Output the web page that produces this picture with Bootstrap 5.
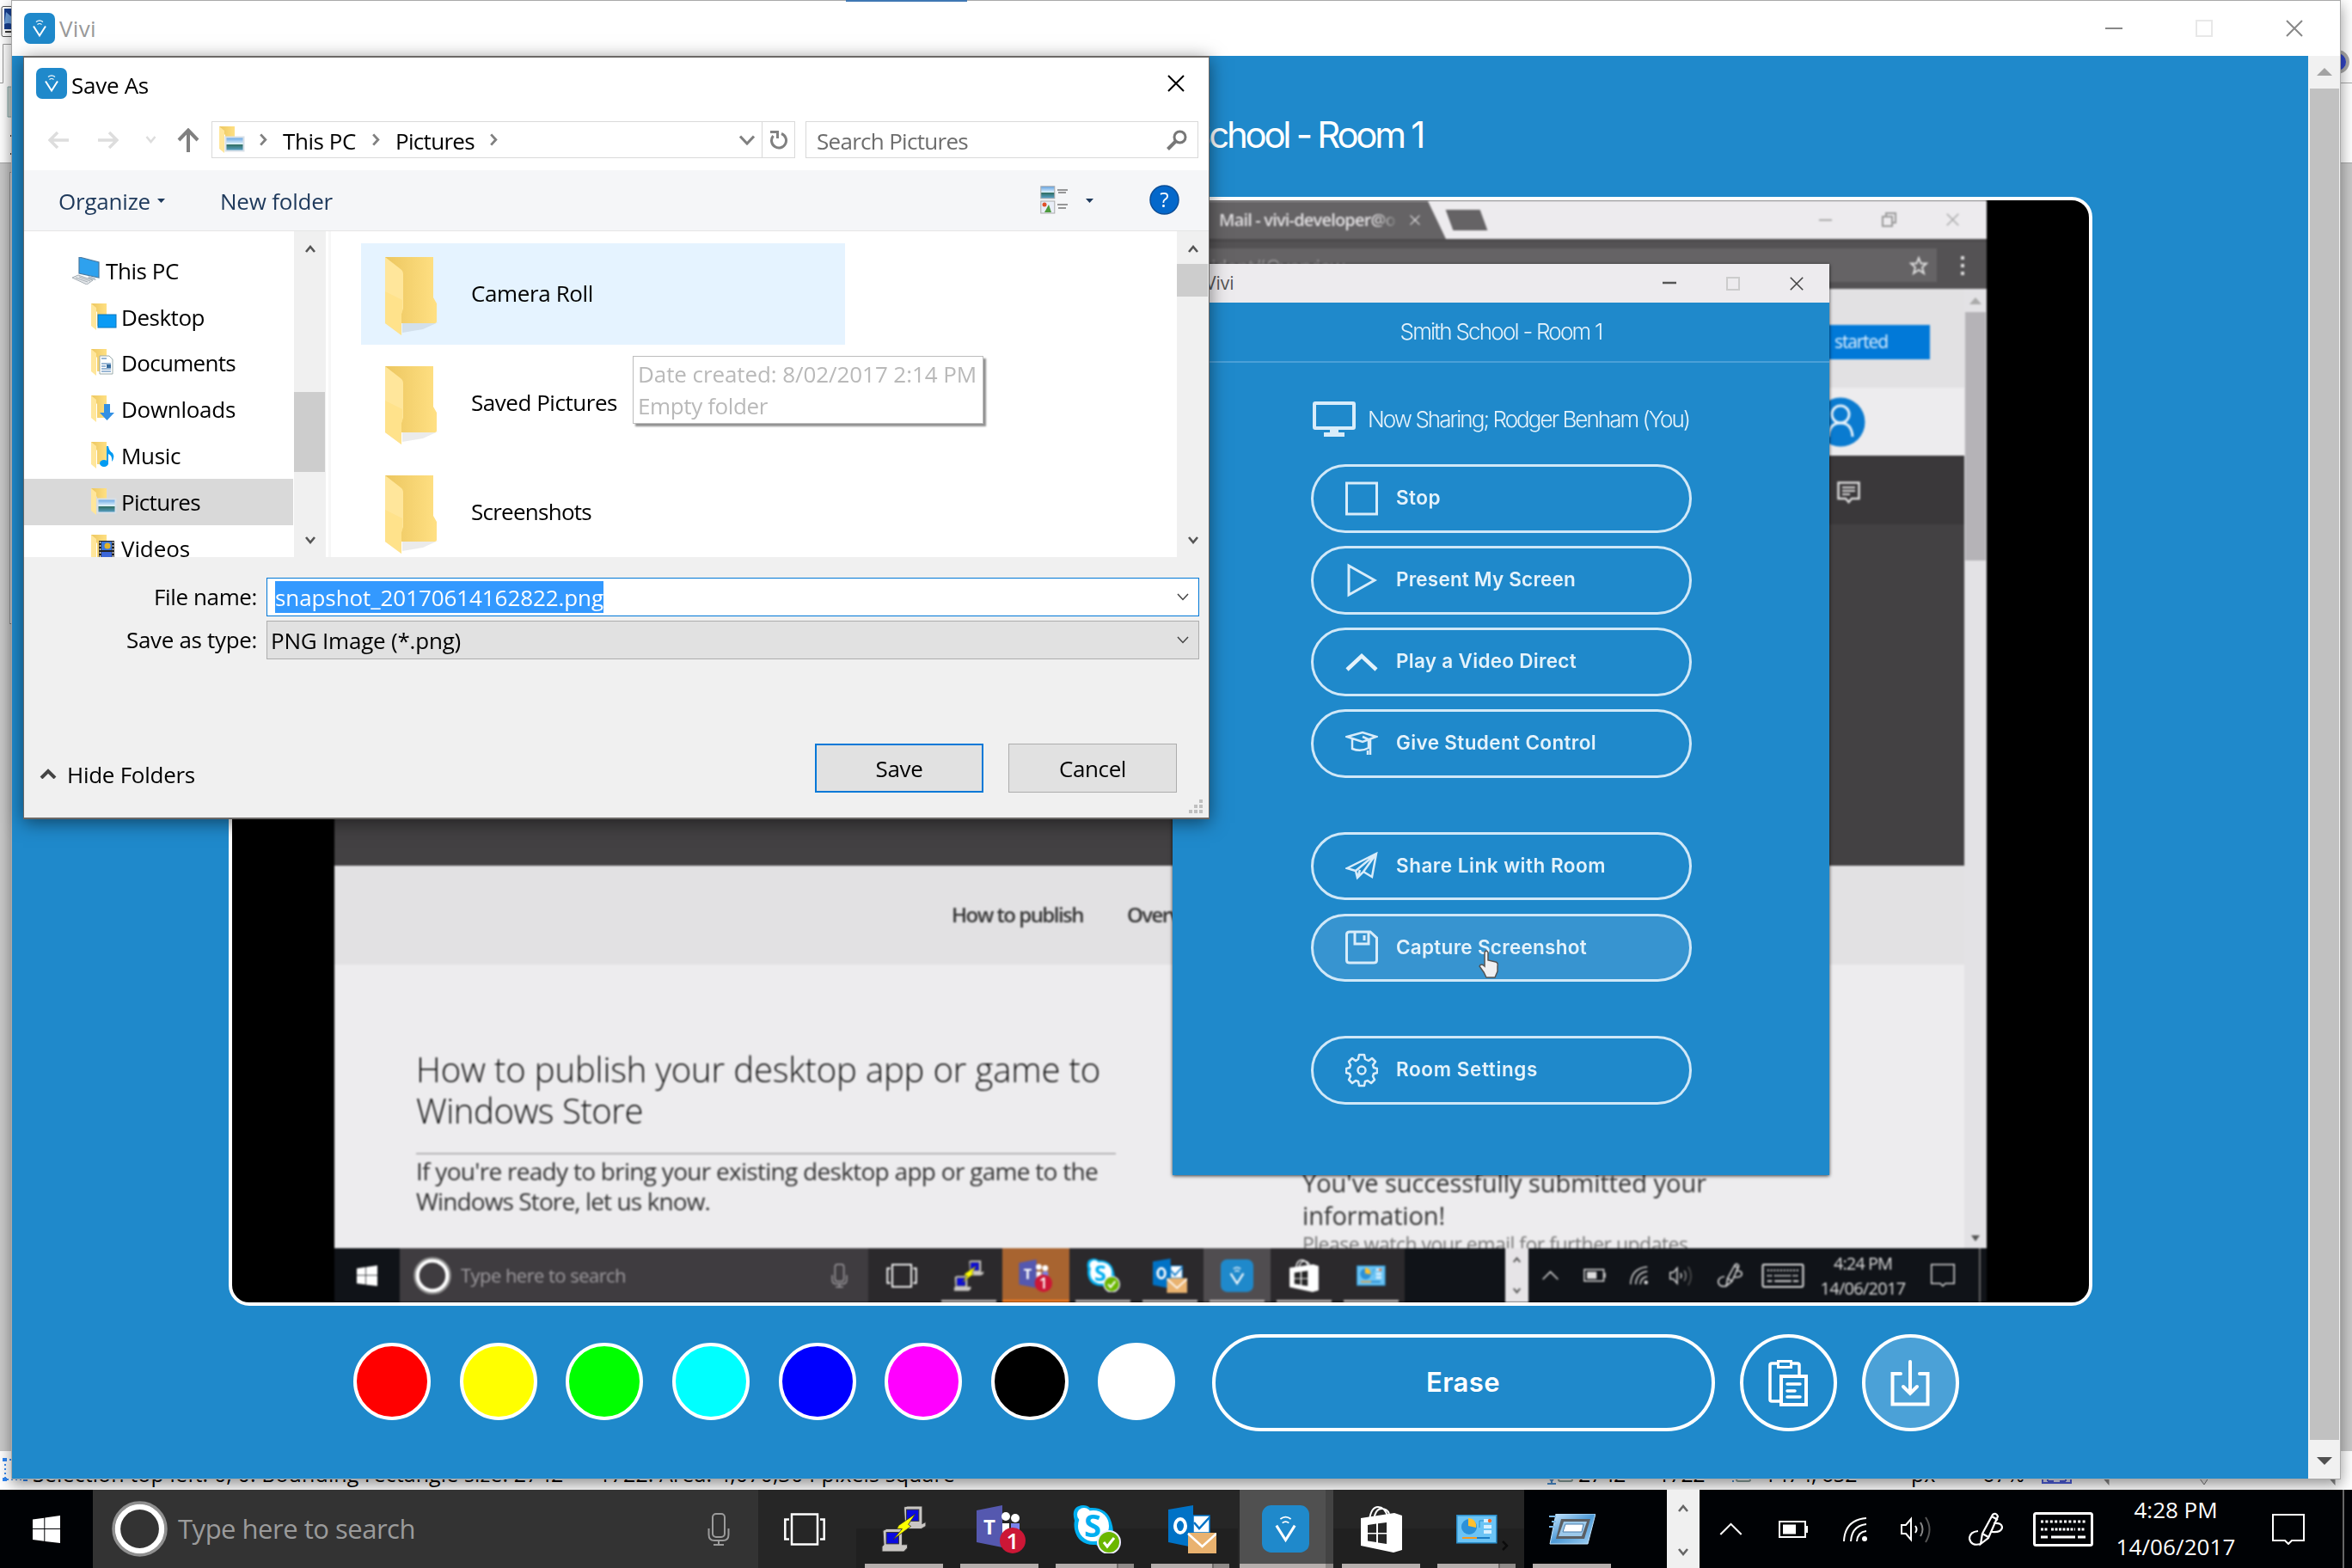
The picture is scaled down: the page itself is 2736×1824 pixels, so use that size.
<!DOCTYPE html>
<html lang="en">
<head>
<meta charset="utf-8">
<meta name="viewport" content="width=device-width, initial-scale=1">
<title>Vivi</title>
<link rel="stylesheet" href="https://cdn.jsdelivr.net/npm/bootstrap@5.3.0/dist/css/bootstrap.min.css">
<style>
:root{--vivi:#1f89cb;--ui:"Open Sans","Noto Sans",sans-serif;--brand:Inter,"Open Sans",sans-serif}
body{width:2736px;height:1824px;overflow:hidden;position:relative;background:#fff;font-family:var(--ui);font-size:26px;line-height:1.36;color:#000}
svg{display:block;flex:none}
span,h1,h2,p,button{white-space:nowrap}
.abs{position:absolute}
/* window behind */
.canvas-bg{top:189px;left:0;width:2736px;height:1499px;background:#c9c9c9;border-top:1px solid #aaa}
.canvas-doc{left:11px;top:200px;width:20px;height:526px;background:#dfe3ea;border:1px solid #999;border-bottom-color:#777}
.statusline{left:0;top:1688px;width:2736px;height:45px;background:#fff;overflow:hidden;font-size:25px;line-height:34px;padding-top:9px}
/* main window */
.win-main{left:13px;top:0;width:2710px;height:1721px;background:#fff;border:1px solid #a9a9a9;box-shadow:0 6px 16px rgba(0,0,0,.42)}
.win-title{height:64px;padding-left:14px}
.win-title span{color:#999;margin-left:5px;padding-top:2px}
.win-ctl{padding-right:43px;color:#888}
.app{height:1655px}
.app-pane{width:2671px;background:var(--vivi)}
.app-head{height:164px;padding-right:1030px;padding-top:63px;font-family:var(--brand);font-size:42px;font-weight:400;color:#fff;line-height:58px;margin:0}
.stage{width:2168px;height:1290px;margin-left:252px;border:4px solid #fff;border-radius:24px;background:#000;overflow:hidden}
.tools{padding-top:33px;padding-left:397px}
.dot{width:90px;height:90px;border-radius:50%;border:4px solid #fff;margin-right:33.700px;margin-bottom:4px;flex:none;padding:0}
.erase{width:585px;height:113px;border:4px solid #fff;border-radius:57px;color:#fff;font-family:var(--brand);font-weight:600;font-size:31px;margin-left:9px;background:none}
.round{width:113px;height:113px;border:4px solid #fff;border-radius:50%;margin-left:29px;background:none;padding:0}
.round.lit{background:#4ba1d7}
.vbar{width:37px;background:#f1f1f1;padding:0 1px 0 2px}
.vbar .btn-cell{height:38px}
.vbar .thumb{background:#c1c1c1;height:1572px}
/* shared screen */
.feed{width:1922px;height:1282px;margin-left:119px;filter:blur(.8px);background:#edebee}
.tabs{height:45px;background:#edebee}
.tab-on{width:1293px;background:#656365;clip-path:polygon(0 2%,1272px 2%,100% 100%,0 100%);color:#e6e4e6;font-size:20px;font-weight:600;padding-right:30px}
.tab-on .fade-txt{background:linear-gradient(90deg,#e6e4e6 88%,#777 100%);-webkit-background-clip:text;color:transparent}
.newtab{width:40px;height:24px;background:#656365;transform:skewX(20deg);margin-left:4px}
.urlbar{height:58px;background:#545254;border-top:3px solid #4b494b}
.urlbar .field{width:1864px;height:39px;background:#656365;color:#989698;font-size:22px;padding-left:1020px;line-height:34px}
.page{width:1896px}
.pg-a{height:115px;background:#e2e1e3;padding-right:40px;padding-top:8px}
.pg-b{height:79px;background:#edecee;padding-right:115px}
.pg-c{height:80px;background:#3a383a;padding-right:121px;padding-top:6px}
.pg-d{height:397px;background:#434143}
.pg-e{height:115px;background:#e2e1e3;padding-left:718px;font-size:24px;font-weight:600;color:#333;gap:51px}
.pg-f{height:330px;background:#edecee;color:#333;overflow:hidden}
.started{width:200px;height:40px;background:#0179d8;color:#dff0ff;font-size:21px;padding-right:49px}
.art{width:814px;margin-left:95px;padding-top:98px;flex:none}
.art h2{font-size:40px;line-height:48px;font-weight:300;margin:0;color:#111}
.art hr{margin:25px 0 2px;border-top:2px solid #b5b4b6;opacity:1}
.art p{font-size:28px;line-height:34.5px;margin:0;font-weight:400}
.art2{margin-left:217px;padding-top:235px}
.art2 p{font-size:29px;line-height:38px;margin:0}
.art2 p.sub{font-size:23px;line-height:28px;color:#777}
.fbar{width:26px;background:#e3e2e5;padding-top:9px;padding-bottom:6px}
.fbar .thumb{width:24px;height:289px;background:#b5b3b7;margin-top:8px}
/* taskbars */
.tb{background:#000205;color:#fff}
.tb-in{height:63px;background:#101318}
.tb-in .cell{width:78px;background:#2b292c;position:relative}
.tb-in .cell.mark-on::after{content:"";position:absolute;left:7px;right:7px;bottom:0;height:3px;background:#b5aeac}
.tb-in .teams{background:#a86430}.tb-in .teams.mark-on::after{left:0;right:0;background:#f47b20}
.tb-in .lit{background:#504d50}
.tb-in .tray{grid-template-columns:50px 54px 48px 50px 64px 60px 126px 60px;font-size:20px;line-height:29px;color:#ddd}
.tb-in .srch{width:545px;background:#3f3c40;color:#9d9a9e;font-size:22px;padding-left:16px;padding-right:24px}
.tb-in .srch span{margin-left:11px}
.tb-in .strip{width:27px;background:#e6e4e7;margin-left:117px;padding:10px 0;color:#555}
.tb-out{left:0;top:1733px;width:2736px;height:91px}
.tb-out .startcell{width:108px}
.tb-out .srch{width:774px;background:#333;color:#9b9b9b;font-size:31px;padding-left:22px;padding-right:33px}
.tb-out .srch span{margin-left:12px}
.tb-out .tview{width:114px;background:#262626;padding-right:6px}
.tb-out .cell{width:111px;background:linear-gradient(#262626 0 50%,#202020 50%);position:relative}
.tb-out .cell::after{content:"";position:absolute;left:10px;width:91px;bottom:0;height:5px;background:#b5aeac}
.tb-out .cell.split::after{background:linear-gradient(90deg,#b5aeac 71px,#6d6866 71px 73px,#8f8a88 73px)}
.tb-out .cell.lit{background:linear-gradient(90deg,#262626 2px,#505050 2px 102px,#434343 102px)}
.tb-out .cell.lit::after{left:2px;width:109px;background:linear-gradient(90deg,#b5aeac 100px,#8f8a88 100px)}
.tb-out .cell.plain{background:none}
.tb-out .strip{width:38px;background:#f0f0f0;margin-left:55px;padding:17px 0 14px;color:#666}
.tb-out .tray{grid-template-columns:72px 74px 70px 72px 90px 90px 172px 90px;font-size:26px;line-height:42.500px}
.tb-out .tray>div{margin-top:-2px}
.tray{display:grid;place-items:center;text-align:center}
.peek{width:2px;background:#666}
/* sharing window */
.win-share{left:1364px;top:307px;width:764px;height:1060px;background:var(--vivi);box-shadow:0 1px 4px rgba(0,0,0,.75);filter:blur(.7px);color:#e4f2fb;font-family:var(--brand)}
.ws-title{height:45px;background:#edebee;color:#555;font-family:var(--ui);font-size:21px;padding-left:38px;padding-right:30px}
.ws-title .ctl{gap:58px;color:#444}
.ws-head{height:70px;border-bottom:2px solid #4aa0d8;font-weight:300;font-size:26px;padding-bottom:1px}
.ws-now{height:118px;padding-left:163px;padding-top:13px;font-weight:300;font-size:26px;gap:14px}
.ws-btn{width:443px;height:79.500px;border:3px solid #d0e8f8;border-radius:40px;color:#e4f2fb;font-weight:600;font-size:22.500px;margin:0 0 15.500px 161px;padding:0 0 0 37px;background:none}
.ws-btn svg{margin-right:21px}
.ws-btn.hot{background:#3794d0}
.ws-btn.gap-after{margin-bottom:63px}
/* save dialog */
.dlg{left:27px;top:65px;width:1380px;height:888px;background:#fff;border:1px solid #6b6866;border-top-width:2px;border-bottom-width:2px;box-shadow:0 4px 20px rgba(0,0,0,.5)}
.dlg-title{height:60px;padding:0 28px 0 14px}
.dlg-title span{margin-left:5px;padding-top:5px}
.dlg-nav{height:71px;padding-left:28px}
.dlg-nav span{padding-top:4px}
.addr{width:679px;height:43px;border:1px solid #d9d9d9;margin-left:14px;padding-left:8px}
.addr .rf{width:38px;border-left:1px solid #d9d9d9}
.findbox{width:457px;height:43px;border:1px solid #d9d9d9;margin-left:12px;padding:0 12px 0 12px;color:#6d6d6d}
.dlg-tools{height:71px;background:#f5f6f8;border-bottom:1px solid #e5e5e5;color:#1e395b;padding-left:40px;padding-right:34px}
.dlg-tools span{padding-top:3px}
.dlg-body{height:379px}
.tree{width:314px;padding-top:19px;overflow:hidden}
.tree>div{height:53.800px;padding-left:78px;gap:5px;flex:none}
.tree>div.top{padding-left:56px;gap:7px}
.tree span{padding-top:1px}
.tree .on{background:#d9d9d9;margin-right:1px}
.sb{width:37px;background:#f0f0f0;padding:16px 0 15px;color:#555}
.sb svg{margin:0 auto}
.sb .thumb{background:#cdcdcd;width:36px}
.vline{width:3px;background:#f7f7f7;margin-left:3px}
.files{padding:14px 0 0 35px;overflow:hidden}
.tile{width:563px;height:118px;margin-bottom:9px;padding-left:28px;gap:38px;flex:none}
.tile svg{margin-top:6px}
.tile.hover{background:#e5f3ff}
.dlg-foot{height:303px;background:#f0f0f0;padding-top:24px}
.lab{width:271px;text-align:right;margin-right:11px}
.combo{width:1085px;height:45px;border:1px solid #adadad;background:#e1e1e1;padding:0 11px 0 4px}
.combo.act{border-color:#0078d7;background:#fff;padding-left:9px}
.combo.act span{background:#3399ff;color:#fff;height:37px;line-height:38px}
.second{margin-top:5px}
.second span{padding-top:2px}
.acts{margin-top:98px;padding-left:18px}
.hidef{padding-top:19px;gap:12px}
.wbtn{width:196px;height:57px;border:1px solid #adadad;background:#e1e1e1;padding:3px 0 0}
.wbtn.def{border:2px solid #0078d7}
.wbtn.last{margin:0 37px 0 29px}
.grip{margin-top:8px;margin-right:7px}
.tip{left:736px;top:414px;width:408px;height:79px;background:#fff;border:1px solid #bdbdbd;box-shadow:3px 3px 2px #909090;color:#b9b9b9;line-height:36.500px;padding:2px 5px}
</style>
</head>
<body>
<svg width="0" height="0" class="abs" aria-hidden="true">
<defs>
<linearGradient id="gf" x1="0" x2="1"><stop offset="0" stop-color="#ecc65f"/><stop offset="1" stop-color="#ffe083"/></linearGradient>
<linearGradient id="gs" x1="0" y1="0" x2="0" y2="1"><stop offset="0" stop-color="#5d9fe2"/><stop offset=".5" stop-color="#e2f3fb"/><stop offset=".52" stop-color="#2d6b5c"/><stop offset="1" stop-color="#5ba4d0"/></linearGradient>
<linearGradient id="gr" x1="0" x2="1" y2="1"><stop offset="0" stop-color="#cfeaff"/><stop offset=".5" stop-color="#4e9ad6"/><stop offset="1" stop-color="#a6d3f5"/></linearGradient>
</defs>
<symbol id="vivi" viewBox="0 0 36 36"><rect width="36" height="36" rx="7" fill="#1f89cb"/><path d="M11 15.500 18 26.500 25 15.500" fill="none" stroke="#fff" stroke-width="2"/><path d="M14 10.500q4-3.200 8 0M15.500 13.500q2.500-2 5 0" fill="none" stroke="#fff" stroke-width="1.200"/></symbol>
<symbol id="close" viewBox="0 0 20 20"><path d="M1 1 19 19M19 1 1 19" fill="none" stroke="currentColor" stroke-width="2"/></symbol>
<symbol id="up" viewBox="0 0 12 9"><path d="M1 8 6 2 11 8" fill="none" stroke="currentColor" stroke-width="2.600"/></symbol>
<symbol id="dn" viewBox="0 0 12 9"><path d="M1 1 6 7 11 1" fill="none" stroke="currentColor" stroke-width="2.600"/></symbol>
<symbol id="thin" viewBox="0 0 14 9"><path d="M1 1 7 7.500 13 1" fill="none" stroke="#444" stroke-width="1.500"/></symbol>
<symbol id="rt" viewBox="0 0 10 16"><path d="M2 1.500 8 8 2 14.500" fill="none" stroke="#808080" stroke-width="3"/></symbol>
<symbol id="fold" viewBox="0 0 62 92"><path d="M44 84 66 74 60 77H20V88Z" fill="#000" opacity=".08"/><path d="M0 0H56V47L60 54V75Q60 77 58 77H18V40L0 4Z" fill="url(#gf)"/><path d="M0 0 18 14Q21 16 21 20V60L19 66V91L0 77Z" fill="#ffe69b"/><path d="M0 40 20 50V64L19 66V91L0 77Z" fill="#ffdf85" opacity=".7"/></symbol>
<symbol id="mf" viewBox="0 0 30 32"><path d="M0 0H18V26H7V10L0 3Z" fill="url(#gf)"/><path d="M0 0 6 5V31L0 26Z" fill="#ffe69b"/></symbol>
<symbol id="i-desk" viewBox="0 0 30 32"><use href="#mf"/><rect x="8" y="13" width="21" height="15" fill="#0a9bf5" stroke="#0b76be"/></symbol>
<symbol id="i-doc" viewBox="0 0 30 32"><use href="#mf"/><path d="M10 8H21L25 12V29H10Z" fill="#fff" stroke="#9aa"/><path d="M12 11H18M12 17H23M12 20H17M12 23H23M12 26H23" stroke="#7aa0c8" stroke-width="1.500"/><rect x="18" y="18" width="5" height="4" fill="#356a9c"/></symbol>
<symbol id="i-down" viewBox="0 0 30 32"><use href="#mf"/><path d="M15 10H22V20H27L18.500 29 10 20H15Z" fill="#3390e4"/></symbol>
<symbol id="i-mus" viewBox="0 0 30 32"><use href="#mf"/><ellipse cx="15" cy="25" rx="5" ry="4" fill="#009bf2"/><path d="M18 5H20Q21 11 25 13 28 18 24 23 25 16 20 14V26H18Z" fill="#009bf2"/></symbol>
<symbol id="i-pic" viewBox="0 0 30 32"><use href="#mf"/><rect x="7.500" y="12.500" width="21" height="16" fill="url(#gs)" stroke="#d8e0e8" stroke-width="2"/></symbol>
<symbol id="i-vid" viewBox="0 0 30 32"><use href="#mf"/><rect x="9" y="7" width="18" height="25" fill="#222"/><rect x="12" y="8" width="12" height="10" fill="#3b78dc"/><circle cx="19" cy="13" r="3.500" fill="#e4b429"/><rect x="12" y="20" width="12" height="12" fill="#3b66d8"/><path d="M10.500 8V32M25.500 8V32" stroke="#ddd" stroke-dasharray="2 2" stroke-width="1.500"/></symbol>
<symbol id="i-pc" viewBox="0 0 32 32"><path d="M8 0 31 6V24L8 19Z" fill="#2ea1ee" stroke="#4b7aa0" stroke-width="1.200"/><path d="M19 22 26 24 28 27 18 26Z" fill="#b9c3cc"/><path d="M0 24 7 21 24 27 17 32Z" fill="#e4e7ea" stroke="#a5adb4"/><path d="M4 24 18 29M8 23 21 28" stroke="#a5adb4"/></symbol>
<symbol id="win" viewBox="0 0 32 32"><path d="M0 4.600 13.300 2.700V15H0ZM14.300 2.500 32 0V15H14.300ZM0 16H13.300V29.800L0 28ZM14.300 16H32V32L14.300 30Z" fill="currentColor"/></symbol>
<symbol id="ring" viewBox="0 0 66 66"><circle cx="33" cy="33" r="31" fill="none" stroke="#8f8f8f" stroke-width="3.500"/><circle cx="33" cy="33" r="26" fill="none" stroke="#fff" stroke-width="6.500"/></symbol>
<symbol id="mic" viewBox="0 0 26 38"><rect x="6" y="1" width="14" height="27" rx="4" fill="none" stroke="currentColor" stroke-width="2"/><path d="M1.500 18V25Q1.500 32 8 32H18Q24.500 32 24.500 25V18M13 32V37M7 37H19" fill="none" stroke="currentColor" stroke-width="2"/></symbol>
<symbol id="tv" viewBox="0 0 48 38"><rect x="9" y="1.500" width="30" height="35" fill="none" stroke="currentColor" stroke-width="2.500"/><path d="M6 7.500H1.300V30.500H6M42 7.500H46.700V30.500H42" fill="none" stroke="currentColor" stroke-width="2.500"/></symbol>
<symbol id="putty" viewBox="0 0 52 52"><g stroke="#333" stroke-width="1"><path d="M26 1 30 0H47V20L51 18V23L46 26H25V22L27 19Z" fill="#c9c6c3"/><rect x="29" y="4" width="14" height="13" fill="#0a0ae0"/><path d="M2 28 6 26H24V44L30 44V48L26 52H1V46L3 44Z" fill="#c9c6c3"/><rect x="6" y="30" width="14" height="13" fill="#0a0ae0"/></g><path d="M39 9 20 22 18 26H24L14 38 34 23 31 21Z" fill="#ff0" stroke="#332" stroke-width=".8"/></symbol>
<symbol id="teams" viewBox="0 0 58 56"><path d="M0 6 30 0V49L0 43Z" fill="#5558af"/><text x="8" y="34" font-family="Open Sans" font-weight="700" font-size="24" fill="#fff">T</text><circle cx="34" cy="13" r="5" fill="#fff"/><circle cx="45" cy="15" r="5" fill="#fff"/><path d="M30 21H38V32H30Z" fill="#fff"/><path d="M40 21H50V30H40Z" fill="#7b83eb"/><circle cx="42" cy="41" r="15" fill="#cc1736"/><text x="34.500" y="50.500" font-family="Open Sans" font-size="26" font-weight="600" fill="#fff">1</text></symbol>
<symbol id="skype" viewBox="0 0 56 56"><path d="M12 0Q17 0 20 3 40 2 45 20 48 30 46 33 48 47 35 48 29 48 27 46 6 47 2 28 1 22 2 18-3 1 12 0Z" fill="#00aff0"/><circle cx="24" cy="24" r="18" fill="#fff"/><circle cx="13" cy="11" r="8" fill="#fff"/><circle cx="35" cy="36" r="8" fill="#fff"/><text x="13" y="37" font-family="Open Sans" font-size="36" font-weight="700" fill="#00aff0">S</text><circle cx="42" cy="43" r="13" fill="#6bb700" stroke="#eef" stroke-width="2"/><path d="M36 43 40 48 48 38" fill="none" stroke="#fff" stroke-width="3"/></symbol>
<symbol id="outlook" viewBox="0 0 56 56"><path d="M0 5 29 0V49L0 43Z" fill="#0072c6"/><ellipse cx="14" cy="24" rx="6" ry="8" fill="none" stroke="#fff" stroke-width="4"/><path d="M29 12H48V32H29Z" fill="#fff" stroke="#0072c6" stroke-width="1.500"/><path d="M30 20 36 27 48 14" fill="none" stroke="#0072c6" stroke-width="2.500"/><rect x="23" y="32" width="33" height="24" fill="#e9b26f"/><path d="M23 33 39.500 48 56 33" fill="none" stroke="#fff" stroke-width="2.500"/></symbol>
<symbol id="store" viewBox="0 0 48 54"><path d="M10 16Q12 1 20 1T31 12M15 16Q17 3 24 3T33 9" fill="none" stroke="#fff" stroke-width="2"/><path d="M0 14 39 8 48 11V51L38 54 0 46Z" fill="#fff"/><path d="M8 22 18 20.500V31H8ZM20 20.200 30 19V31H20ZM8 32.500H18V42L8 40.500ZM20 32.500H30V44L20 42.500Z" fill="#262626"/></symbol>
<symbol id="cpl" viewBox="0 0 48 34"><rect x=".8" y=".8" width="46" height="32" fill="#6cc4f5" stroke="#2b8fcb" stroke-width="1.500"/><circle cx="15" cy="14" r="9" fill="#2c91d8"/><path d="M14 13V4A9 9 0 0 1 23 15Z" fill="#ffc02e"/><path d="M27 15V7H33" fill="none" stroke="#2b8fcb"/><rect x="32" y="5" width="9" height="4" fill="#d8f0ff"/><circle cx="39" cy="7" r="2.200" fill="#f06a2a"/><rect x="32" y="12" width="9" height="4" fill="#d8f0ff"/><rect x="32" y="18" width="9" height="4" fill="#d8f0ff"/><path d="M7 27H24" stroke="#f49a22" stroke-width="2"/><path d="M24 27H39" stroke="#1b7dc4" stroke-width="2"/></symbol>
<symbol id="runi" viewBox="0 0 54 36"><path d="M8 0H54L45 35H1Z" fill="url(#gr)" stroke="#bfe2fb"/><path d="M14 6H48L41 29H8Z" fill="#5b5f63"/><path d="M17 9H44L38 26H11Z" fill="#9cc9ea"/><path d="M19 12H40L38 21H16Z" fill="#fff" stroke="#4b7dab"/><path d="M0 3H8M3 9H8M0 15H6" stroke="#7ab8e8" stroke-width="2"/></symbol>
<symbol id="bat" viewBox="0 0 34 20"><rect x="1" y="1" width="30" height="18" fill="none" stroke="currentColor" stroke-width="2"/><rect x="32" y="6" width="2" height="8" fill="currentColor"/><rect x="5" y="4.500" width="15" height="11" fill="currentColor"/></symbol>
<symbol id="wifi" viewBox="0 0 28 28"><path d="M1 28Q2 3 27 1M9 28Q10 10 27 8M16 28Q17 17 27 16" fill="none" stroke="currentColor" stroke-width="2"/><circle cx="25" cy="25" r="3" fill="currentColor"/></symbol>
<symbol id="vol" viewBox="0 0 36 32"><path d="M1 11H6L12 4V28L6 21H1Z" fill="none" stroke="currentColor" stroke-width="2"/><path d="M17 12Q20 16 17 20" fill="none" stroke="currentColor" stroke-width="2"/><path d="M23 8Q28 16 23 24" fill="none" stroke="#888" stroke-width="2"/><path d="M29 2Q38 16 29 31" fill="none" stroke="#555" stroke-width="2"/></symbol>
<symbol id="pen" viewBox="0 0 40 40"><path d="M14 37 16 25 28 3Q32 0 34 5L23 30ZM27 5 34 9M16 25 23 29" fill="none" stroke="currentColor" stroke-width="2.200"/><path d="M11 22Q1 23 1 31 3 40 14 37M29 13Q39 12 39 18 38 24 27 23" fill="none" stroke="currentColor" stroke-width="2.200"/></symbol>
<symbol id="kb" viewBox="0 0 70 40"><rect x="1.500" y="1.500" width="67" height="37" rx="2" fill="none" stroke="currentColor" stroke-width="3"/><path d="M9 11H61" stroke="currentColor" stroke-width="3" stroke-dasharray="3 2.400"/><path d="M9 20H18M21 20H49M52 20H61" stroke="currentColor" stroke-width="3" stroke-dasharray="3 1.500"/><path d="M9 29H17M21 29H49M52 29H61" stroke="currentColor" stroke-width="3"/></symbol>
<symbol id="note" viewBox="0 0 38 36"><path d="M1 1H37V31H23L19 35 15 31H1Z" fill="none" stroke="currentColor" stroke-width="2"/></symbol>
<symbol id="caret" viewBox="0 0 28 16"><path d="M1 15 14 2 27 15" fill="none" stroke="currentColor" stroke-width="2.200"/></symbol>
</svg>

<!-- editor window behind everything -->
<div class="abs canvas-bg"></div>
<div class="abs canvas-doc"></div>
<svg class="abs" width="14" height="188" viewBox="0 0 14 188"><rect x="2" y="7.500" width="30" height="35" rx="2" fill="#fff" stroke="#555"/><path d="M5 10H14V34H5Z" fill="#173f8f"/><path d="M7 14 14 20V28Q9 26 5 28Z" fill="#6fa3e0"/><path d="M6 37H14" stroke="#333" stroke-width="2"/><path d="M14 51.500H3.500V96.500H0" fill="none" stroke="#999"/><path d="M14 101H9V136H14" fill="#c9d6d3" stroke="#8aa"/><path d="M12 158H14M12 179H14" stroke="#333" stroke-width="2"/></svg>
<svg class="abs end-0" width="14" height="188" viewBox="0 0 14 188"><circle cx="-3" cy="72" r="12" fill="#3145c8" stroke="#aaa" stroke-width="4"/><path d="M0 96.500H14" stroke="#aaa"/></svg>
<div class="abs statusline">
  <svg class="abs" style="left:2px;top:7px" width="32" height="40" viewBox="0 0 32 40"><path d="M4 3V26H30M4 3H14" fill="none" stroke="#3a8cf0" stroke-width="2" stroke-dasharray="2 3"/><path d="M1 1H6V5H1ZM1 24H6V28H1ZM25 24H30V28H25Z" fill="#2f86f3"/></svg>
  <span class="abs" style="left:38px" data-w="1073">Selection top left: 0, 0. Bounding rectangle size: 2742 &nbsp;× &nbsp;1722. Area: 4,070,304 pixels square</span>
  <svg class="abs" style="left:1799px;top:26px" width="34" height="15" viewBox="0 0 34 15"><path d="M6 0V12M1 12H11M3 5 6 9 9 5" stroke="#4b8fd0" stroke-width="2" fill="none"/><rect x="14" y="-7" width="16" height="16" rx="2" fill="none" stroke="#8aa09c" stroke-width="2"/></svg>
  <span class="abs" style="left:1836px" data-w="147">2742 &nbsp; × 1722</span>
  <svg class="abs" style="left:2014px;top:26px" width="24" height="14" viewBox="0 0 24 14"><path d="M2 0V12" stroke="#4b8fd0" stroke-dasharray="2 2" stroke-width="2"/><rect x="6" y="-7" width="16" height="16" rx="2" fill="none" stroke="#8aa09c" stroke-width="2"/></svg>
  <span class="abs" style="left:2052px" data-w="108">1474, 652</span>
  <span class="abs" style="left:2223px">px</span>
  <span class="abs" style="left:2306px" data-w="49">67%</span>
  <svg class="abs" style="left:2375px;top:14px" width="36" height="24" viewBox="0 0 36 24"><rect x="1" y="-3" width="33" height="26" fill="#dfe4ff" stroke="#4e5fe0" stroke-width="2"/><path d="M7 15V21M7 21H14M28 15V21M28 21H21" stroke="#4e5fe0" stroke-width="2" fill="none"/></svg>
  <svg class="abs" style="left:2442px;top:28px" width="276" height="14" viewBox="0 0 276 14"><path d="M3 0 10 8V2M266 0 273 8V2" fill="none" stroke="#888" stroke-width="3"/><path d="M114 0 122 11 129 0" fill="#eee" stroke="#777"/></svg>
</div>

<!-- Vivi main window -->
<div class="abs win-main">
  <div class="win-title d-flex align-items-center">
    <svg width="36" height="36"><use href="#vivi"/></svg>
    <span data-w="43">Vivi</span>
    <div class="win-ctl ms-auto d-flex align-items-center">
      <svg width="20" height="20" viewBox="0 0 20 20"><path d="M0 10H20" stroke="#888" stroke-width="2"/></svg>
      <svg style="margin:0 85px" width="20" height="20" viewBox="0 0 20 20"><rect x="1" y="1" width="18" height="18" fill="none" stroke="#e8e8e8" stroke-width="2"/></svg>
      <svg width="20" height="20"><use href="#close"/></svg>
    </div>
  </div>
  <div class="app d-flex">
    <div class="app-pane">
      <h1 class="app-head text-end"><span data-w="377">Smith School - Room 1</span></h1>
      <div class="stage">
        <div class="feed d-flex flex-column">
          <div class="tabs d-flex align-items-center">
            <div class="tab-on h-100 d-flex align-items-center justify-content-end">
              <span class="fade-txt" data-w="205">Mail - vivi-developer@o</span>
              <svg style="margin-left:17px" width="12" height="12"><use href="#close"/></svg>
            </div>
            <div class="newtab"></div>
            <div class="ms-auto d-flex align-items-center" style="padding-right:32px;gap:58px;color:#aaa">
              <svg width="15" height="14" viewBox="0 0 15 14"><path d="M0 7H15" stroke="#aaa" stroke-width="2"/></svg>
              <svg width="17" height="17" viewBox="0 0 17 17"><path d="M1 5H12V16H1ZM5 5V1H16V12H12" fill="none" stroke="#999" stroke-width="2"/></svg>
              <svg width="15" height="15"><use href="#close"/></svg>
            </div>
          </div>
          <div class="urlbar d-flex align-items-center">
            <div class="field d-flex align-items-center justify-content-between">
              <span data-w="155">ident#Overview</span>
              <svg style="margin-right:10px" width="22" height="22" viewBox="0 0 22 22"><path d="M11 2 13.500 8.500H20L15 13 17 20 11 16 5 20 7 13 2 8.500H8.500Z" fill="none" stroke="#ddd" stroke-width="2"/></svg>
            </div>
            <svg style="margin-left:28px" width="5" height="24" viewBox="0 0 5 24"><path d="M0 1H4V5H0ZM0 10H4V14H0ZM0 19H4V23H0Z" fill="#ddd"/></svg>
          </div>
          <div class="d-flex" style="height:1116px">
            <div class="page">
              <div class="pg-a d-flex align-items-center justify-content-end"><div class="started d-flex align-items-center justify-content-end"><span data-w="62">started</span></div></div>
              <div class="pg-b d-flex align-items-center justify-content-end">
                <svg width="58" height="58" viewBox="0 0 58 58"><circle cx="29" cy="29" r="28.500" fill="#0a7bd0"/><circle cx="29" cy="20" r="10" fill="none" stroke="#e6f2fb" stroke-width="3"/><path d="M15 46Q16 30 29 30T43 46" fill="none" stroke="#e6f2fb" stroke-width="3"/></svg>
              </div>
              <div class="pg-c d-flex align-items-center justify-content-end">
                <svg width="27" height="26" viewBox="0 0 27 26"><path d="M1.500 1.500H25.500V20H17L13.500 24 10 20H1.500Z" fill="none" stroke="#ddd" stroke-width="2.500"/><path d="M6 7H21M6 11H21M6 15H15" stroke="#ddd" stroke-width="2"/></svg>
              </div>
              <div class="pg-d"></div>
              <div class="pg-e d-flex align-items-center"><span data-w="153">How to publish</span><span data-w="96">Overview</span></div>
              <div class="pg-f d-flex">
                <div class="art">
                  <h2><span data-w="796">How to publish your desktop app or game to</span><br><span data-w="264">Windows Store</span></h2>
                  <hr>
                  <p><span data-w="793">If you're ready to bring your existing desktop app or game to the</span><br><span data-w="342">Windows Store, let us know.</span></p>
                </div>
                <div class="art2">
                  <p><span data-w="470">You've successfully submitted your</span><br><span data-w="166">information!</span></p>
                  <p class="sub"><span data-w="454">Please watch your email for further updates.</span></p>
                </div>
              </div>
            </div>
            <div class="fbar d-flex flex-column align-items-center">
              <svg width="14" height="10" viewBox="0 0 14 10"><path d="M0 9 7 1 14 9Z" fill="#aaa"/></svg>
              <div class="thumb"></div>
              <svg class="mt-auto" width="12" height="10" viewBox="0 0 12 10"><path d="M1 1H11L6 8Z" fill="#555"/></svg>
            </div>
          </div>
          <div class="tb tb-in d-flex">
            <div class="d-flex align-items-center justify-content-center" style="width:76px"><svg width="24" height="24"><use href="#win"/></svg></div>
            <div class="srch d-flex align-items-center"><svg width="44" height="46"><use href="#ring"/></svg><span data-w="192">Type here to search</span><svg class="ms-auto" width="19" height="28"><use href="#mic"/></svg></div>
            <div class="cell d-flex align-items-center justify-content-center"><svg width="36" height="28"><use href="#tv"/></svg></div>
            <div class="cell mark-on d-flex align-items-center justify-content-center"><svg width="36" height="36"><use href="#putty"/></svg></div>
            <div class="cell mark-on teams d-flex align-items-center justify-content-center"><svg width="40" height="38"><use href="#teams"/></svg></div>
            <div class="cell mark-on d-flex align-items-center justify-content-center"><svg width="39" height="39"><use href="#skype"/></svg></div>
            <div class="cell mark-on d-flex align-items-center justify-content-center"><svg width="40" height="40"><use href="#outlook"/></svg></div>
            <div class="cell mark-on lit d-flex align-items-center justify-content-center"><svg width="38" height="38"><use href="#vivi"/></svg></div>
            <div class="cell mark-on d-flex align-items-center justify-content-center"><svg width="34" height="38"><use href="#store"/></svg></div>
            <div class="cell mark-on d-flex align-items-center justify-content-center"><svg width="34" height="24"><use href="#cpl"/></svg></div>
            <div class="strip d-flex flex-column align-items-center justify-content-between"><svg width="9" height="7"><use href="#up"/></svg><svg width="9" height="7"><use href="#dn"/></svg></div>
            <div class="tray">
              <svg width="19" height="11"><use href="#caret"/></svg><svg width="26" height="15"><use href="#bat"/></svg><svg width="21" height="21"><use href="#wifi"/></svg><svg width="27" height="24"><use href="#vol"/></svg><svg width="29" height="29"><use href="#pen"/></svg><svg width="50" height="28"><use href="#kb"/></svg>
              <div><span data-w="68">4:24 PM</span><br><span data-w="99">14/06/2017</span></div><svg width="28" height="27"><use href="#note"/></svg>
            </div>
            <div class="peek" style="margin-left:12px"></div>
          </div>
        </div>
      </div>
      <div class="tools d-flex align-items-center">
        <button class="dot" style="background:#f00"></button><button class="dot" style="background:#ff0"></button><button class="dot" style="background:#0f0"></button><button class="dot" style="background:#0ff"></button><button class="dot" style="background:#00f"></button><button class="dot" style="background:#f0f"></button><button class="dot" style="background:#000"></button><button class="dot" style="background:#fff"></button>
        <button class="erase"><span data-w="86">Erase</span></button>
        <button class="round d-flex align-items-center justify-content-center"><svg width="46" height="54" viewBox="0 0 46 54"><path d="M13 48H4Q2 48 2 46V6Q2 4 4 4H11M27 4H34Q36 4 36 6V17" fill="none" stroke="#fff" stroke-width="3.500"/><rect x="11.500" y="1.500" width="15" height="7" fill="none" stroke="#fff" stroke-width="3"/><rect x="15" y="19" width="29" height="33" fill="none" stroke="#fff" stroke-width="4"/><path d="M22 28H37M22 36H31M22 43H37" stroke="#fff" stroke-width="3.500" stroke-linecap="round"/></svg></button>
        <button class="round lit d-flex align-items-center justify-content-center"><svg width="46" height="54" viewBox="0 0 46 54"><path d="M12 16H2.500V51.500H43.500V16H34" fill="none" stroke="#fff" stroke-width="4" stroke-linecap="round"/><path d="M23 2V38M15 31 23 39 31 31" fill="none" stroke="#fff" stroke-width="4" stroke-linecap="round"/></svg></button>
      </div>
    </div>
    <div class="vbar">
      <div class="btn-cell d-flex align-items-center justify-content-center"><svg width="18" height="10" viewBox="0 0 18 10"><path d="M0 9 9 0 18 9Z" fill="#a3a3a3"/></svg></div>
      <div class="thumb"></div>
      <div class="btn-cell d-flex align-items-center justify-content-center" style="padding-top:12px"><svg width="18" height="10" viewBox="0 0 18 10"><path d="M0 0 9 9 18 0Z" fill="#505050"/></svg></div>
    </div>
  </div>
</div>
<div class="abs" style="left:984px;top:0;width:141px;height:2px;background:#3f78b4"></div>

<!-- room window inside the shared screen -->
<div class="abs win-share">
  <div class="ws-title d-flex align-items-center"><span>Vivi</span>
    <div class="ctl ms-auto d-flex align-items-center">
      <svg width="16" height="16" viewBox="0 0 16 16"><path d="M0 7H16" stroke="#555" stroke-width="2.500"/></svg>
      <svg width="16" height="16" viewBox="0 0 16 16"><rect x="1" y="1" width="14" height="14" fill="none" stroke="#ccc" stroke-width="2"/></svg>
      <svg width="16" height="16"><use href="#close"/></svg>
    </div>
  </div>
  <div class="ws-head d-flex align-items-center justify-content-center"><span data-w="235">Smith School - Room 1</span></div>
  <div class="ws-now d-flex align-items-center">
    <svg width="50" height="41" viewBox="0 0 50 41"><rect x="2" y="2" width="46" height="29" rx="1" fill="none" stroke="#d8ecfa" stroke-width="4"/><path d="M20 31H30V36H37V41H13V36H20Z" fill="#d8ecfa"/></svg>
    <span data-w="374">Now Sharing; Rodger Benham (You)</span>
  </div>
  <button class="ws-btn d-flex align-items-center"><svg width="38" height="40" viewBox="0 0 38 40"><rect x="1.500" y="2" width="35" height="36" fill="none" stroke="#d8ecfa" stroke-width="3"/></svg><span data-w="52">Stop</span></button>
  <button class="ws-btn d-flex align-items-center"><svg width="38" height="40" viewBox="0 0 38 40"><path d="M4 3V37L34 20Z" fill="none" stroke="#d8ecfa" stroke-width="3"/></svg><span data-w="209">Present My Screen</span></button>
  <button class="ws-btn d-flex align-items-center"><svg width="38" height="40" viewBox="0 0 38 40"><path d="M2 29 19 13 36 29" fill="none" stroke="#e4f2fb" stroke-width="4.500"/></svg><span data-w="210">Play a Video Direct</span></button>
  <button class="ws-btn gap-after d-flex align-items-center"><svg width="38" height="40" viewBox="0 0 38 40"><path d="M2 12 20 7 36 12 20 18ZM8 15V26Q18 30 27 25V16M20 12 29 16V33M26 28V33" fill="none" stroke="#d8ecfa" stroke-width="2.500"/></svg><span data-w="233">Give Student Control</span></button>
  <button class="ws-btn d-flex align-items-center"><svg width="38" height="40" viewBox="0 0 38 40"><path d="M2 23 36 6 31 33 21 27 14 34 12 26ZM12 26 36 6 21 27M14 34 17 25" fill="none" stroke="#d8ecfa" stroke-width="2.500"/></svg><span data-w="244">Share Link with Room</span></button>
  <button class="ws-btn hot gap-after d-flex align-items-center"><svg width="38" height="40" viewBox="0 0 38 40"><path d="M5 2H29L36.500 9V35Q36.500 38 33 38H5Q1.500 38 1.500 35V5Q1.500 2 5 2ZM11 2V16H27V2M22 6V12" fill="none" stroke="#d8ecfa" stroke-width="3"/></svg><span data-w="222">Capture Screenshot</span></button>
  <button class="ws-btn d-flex align-items-center"><svg width="38" height="40" viewBox="0 0 38 40"><path d="M16 2H22L23 7 27 9 31 6 35 10 32 14 33 17 37 18V23L33 24 32 27 34 31 30 35 26 32 23 33 22 38H16L15 33 12 32 8 35 4 31 6 27 5 24 1 23V18L5 17 6 14 4 10 8 6 12 9 15 7Z" fill="none" stroke="#d8ecfa" stroke-width="2.500" stroke-linejoin="round"/><circle cx="19" cy="20" r="4.500" fill="none" stroke="#d8ecfa" stroke-width="2.500"/></svg><span data-w="165">Room Settings</span></button>
  <svg class="abs" style="left:355px;top:797px" width="26" height="34" viewBox="0 0 26 34"><path d="M8 18V4Q10 0 12 4V13L21 15Q24 16 23 20V26L20 33H10L7 27 2 20Q4 16 8 20Z" fill="#f0f0f2" stroke="#555" stroke-width="1.500"/></svg>
</div>

<!-- Save As dialog -->
<div class="abs dlg">
  <div class="dlg-title d-flex align-items-center">
    <svg width="36" height="36"><use href="#vivi"/></svg><span data-w="90">Save As</span>
    <svg class="ms-auto" width="20" height="20"><use href="#close"/></svg>
  </div>
  <div class="dlg-nav d-flex align-items-center">
    <svg width="24" height="20" viewBox="0 0 24 20"><path d="M24 10H3M11 1 2 10 11 19" fill="none" stroke="#ddd" stroke-width="3.500"/></svg>
    <svg style="margin-left:34px" width="24" height="20" viewBox="0 0 24 20"><path d="M0 10H21M13 1 22 10 13 19" fill="none" stroke="#ddd" stroke-width="3.500"/></svg>
    <svg style="margin:0 24px 0 31px;color:#ddd" width="13" height="9"><use href="#dn"/></svg>
    <svg width="26" height="28" viewBox="0 0 26 28"><path d="M13 28V3M2 14 13 2.500 24 14" fill="none" stroke="#808080" stroke-width="4"/></svg>
    <div class="addr d-flex align-items-center">
      <svg width="30" height="32"><use href="#i-pic"/></svg>
      <svg style="margin:0 18px 0 16px" width="10" height="15"><use href="#rt"/></svg>
      <span data-w="85">This PC</span>
      <svg style="margin:0 18px" width="10" height="15"><use href="#rt"/></svg>
      <span data-w="92">Pictures</span>
      <svg style="margin-left:17px" width="10" height="15"><use href="#rt"/></svg>
      <svg class="ms-auto" style="margin-right:8px" width="18" height="12" viewBox="0 0 18 12"><path d="M1 1.500 9 10 17 1.500" fill="none" stroke="#808080" stroke-width="3"/></svg>
      <div class="rf h-100 d-flex align-items-center justify-content-center"><svg width="22" height="23" viewBox="0 0 22 23"><path d="M14 4.500A8.500 8.500 0 1 1 4.500 7" fill="none" stroke="#808080" stroke-width="3"/><path d="M1 1H11V10H8V4H1Z" fill="#808080"/></svg></div>
    </div>
    <div class="findbox d-flex align-items-center justify-content-between"><span data-w="176">Search Pictures</span>
      <svg width="24" height="24" viewBox="0 0 24 24"><circle cx="15.500" cy="8.500" r="6.500" fill="none" stroke="#777" stroke-width="3"/><path d="M11 13 1.500 22.500" stroke="#777" stroke-width="4"/></svg></div>
  </div>
  <div class="dlg-tools d-flex align-items-center">
    <span data-w="107">Organize</span><svg style="margin:0 64px 0 8px" width="9" height="5" viewBox="0 0 9 5"><path d="M0 0H9L4.500 5Z" fill="#1e395b"/></svg>
    <span data-w="131">New folder</span>
    <svg class="ms-auto" width="32" height="34" viewBox="0 0 32 34"><rect x=".8" y=".8" width="16" height="14" fill="url(#gs)" stroke="#aaa"/><rect x=".8" y="18" width="16" height="14" fill="#e9eef8" stroke="#aaa"/><circle cx="5" cy="22" r="2.500" fill="#e05028"/><path d="M5 31 10 22 13 31Z" fill="#4c9a3c"/><path d="M20 5H32M21 8H30M20 22H32M21 26H30" stroke="#777" stroke-width="1.300"/></svg>
    <svg style="margin:0 65px 0 21px" width="9" height="5" viewBox="0 0 9 5"><path d="M0 0H9L4.500 5Z" fill="#1e395b"/></svg>
    <svg style="margin-bottom:2px" width="35" height="35" viewBox="0 0 35 35"><circle cx="17.500" cy="17.500" r="16.500" fill="#0468cb" stroke="#0b4c95" stroke-width="1.500"/><text x="17.500" y="26" text-anchor="middle" font-family="Open Sans" font-size="24" fill="#fff">?</text></svg>
  </div>
  <div class="dlg-body d-flex">
    <div class="tree d-flex flex-column flex-shrink-0">
      <div class="top d-flex align-items-center"><svg width="32" height="32"><use href="#i-pc"/></svg><span data-w="85">This PC</span></div>
      <div class="d-flex align-items-center"><svg width="30" height="32"><use href="#i-desk"/></svg><span data-w="97">Desktop</span></div>
      <div class="d-flex align-items-center"><svg width="30" height="32"><use href="#i-doc"/></svg><span data-w="133">Documents</span></div>
      <div class="d-flex align-items-center"><svg width="30" height="32"><use href="#i-down"/></svg><span data-w="133">Downloads</span></div>
      <div class="d-flex align-items-center"><svg width="30" height="32"><use href="#i-mus"/></svg><span data-w="69">Music</span></div>
      <div class="on d-flex align-items-center"><svg width="30" height="32"><use href="#i-pic"/></svg><span data-w="92">Pictures</span></div>
      <div class="d-flex align-items-center"><svg width="30" height="32"><use href="#i-vid"/></svg><span data-w="80">Videos</span></div>
    </div>
    <div class="sb d-flex flex-column flex-shrink-0">
      <svg width="12" height="9"><use href="#up"/></svg><div class="thumb" style="height:93px;margin-top:162px"></div><svg class="mt-auto" width="12" height="9"><use href="#dn"/></svg>
    </div>
    <div class="vline"></div>
    <div class="files d-flex flex-column flex-grow-1">
      <div class="tile hover d-flex align-items-center"><svg width="62" height="92"><use href="#fold"/></svg><span data-w="142">Camera Roll</span></div>
      <div class="tile d-flex align-items-center"><svg width="62" height="92"><use href="#fold"/></svg><span data-w="170">Saved Pictures</span></div>
      <div class="tile d-flex align-items-center"><svg width="62" height="92"><use href="#fold"/></svg><span data-w="140">Screenshots</span></div>
    </div>
    <div class="sb d-flex flex-column flex-shrink-0">
      <svg width="12" height="9"><use href="#up"/></svg><div class="thumb" style="height:38px;margin-top:13px"></div><svg class="mt-auto" width="12" height="9"><use href="#dn"/></svg>
    </div>
  </div>
  <div class="dlg-foot">
    <div class="d-flex align-items-center"><div class="lab"><span data-w="120">File name:</span></div><div class="combo act d-flex align-items-center justify-content-between"><span data-w="382">snapshot_20170614162822.png</span><svg width="14" height="9"><use href="#thin"/></svg></div></div>
    <div class="second d-flex align-items-center"><div class="lab"><span data-w="152">Save as type:</span></div><div class="combo d-flex align-items-center justify-content-between"><span data-w="221">PNG Image (*.png)</span><svg width="14" height="9"><use href="#thin"/></svg></div></div>
    <div class="acts d-flex align-items-start">
      <div class="hidef d-flex align-items-center"><svg style="margin-bottom:3px" width="20" height="12" viewBox="0 0 20 12"><path d="M2 11 10 3 18 11" fill="none" stroke="#444" stroke-width="4"/></svg><span data-w="149">Hide Folders</span></div>
      <button class="wbtn def ms-auto"><span data-w="55">Save</span></button>
      <button class="wbtn last"><span data-w="78">Cancel</span></button>
    </div>
    <svg class="grip ms-auto" width="16" height="16" viewBox="0 0 16 16"><path d="M12 0H16V4H12ZM6 6H10V10H6ZM12 6H16V10H12ZM0 12H4V16H0ZM6 12H10V16H6ZM12 12H16V16H12Z" fill="#bfbfbf"/></svg>
  </div>
</div>
<div class="abs tip"><span data-w="394">Date created: 8/02/2017 2:14 PM</span><br><span data-w="151">Empty folder</span></div>

<!-- taskbar -->
<div class="abs tb tb-out d-flex">
  <div class="startcell d-flex align-items-center justify-content-center"><svg width="32" height="32"><use href="#win"/></svg></div>
  <div class="srch d-flex align-items-center"><svg width="65" height="65"><use href="#ring"/></svg><span data-w="276">Type here to search</span><svg class="ms-auto" width="26" height="38"><use href="#mic"/></svg></div>
  <div class="tview d-flex align-items-center justify-content-center"><svg width="48" height="38"><use href="#tv"/></svg></div>
  <div class="cell d-flex align-items-center justify-content-center"><svg width="53" height="53"><use href="#putty"/></svg></div>
  <div class="cell d-flex align-items-center justify-content-center" style="padding-left:4px"><svg width="58" height="56"><use href="#teams"/></svg></div>
  <div class="cell split d-flex align-items-center justify-content-center" style="padding-left:4px"><svg width="56" height="56"><use href="#skype"/></svg></div>
  <div class="cell split d-flex align-items-center justify-content-center" style="padding-left:4px"><svg width="56" height="56"><use href="#outlook"/></svg></div>
  <div class="cell lit d-flex align-items-center justify-content-center"><svg width="55" height="55"><use href="#vivi"/></svg></div>
  <div class="cell d-flex align-items-center justify-content-center"><svg width="48" height="54"><use href="#store"/></svg></div>
  <div class="cell split d-flex align-items-center justify-content-center"><svg width="48" height="34"><use href="#cpl"/></svg><svg class="abs" style="left:85px;top:59px" width="8" height="12" viewBox="0 0 8 12"><path d="M1 1 6 6 1 11" fill="none" stroke="#0c0c0c" stroke-width="2.500"/></svg></div>
  <div class="cell plain d-flex align-items-center justify-content-center"><svg width="54" height="36"><use href="#runi"/></svg></div>
  <div class="strip d-flex flex-column align-items-center justify-content-between"><svg width="12" height="9"><use href="#up"/></svg><svg width="12" height="9"><use href="#dn"/></svg></div>
  <div class="tray">
    <svg width="27" height="15"><use href="#caret"/></svg><svg width="34" height="20"><use href="#bat"/></svg><svg width="28" height="28"><use href="#wifi"/></svg><svg width="36" height="32"><use href="#vol"/></svg><svg width="40" height="40"><use href="#pen"/></svg><svg width="70" height="40"><use href="#kb"/></svg>
    <div><span data-w="97">4:28 PM</span><br><span data-w="139">14/06/2017</span></div><svg width="38" height="36"><use href="#note"/></svg>
  </div>
  <div class="peek" style="margin-left:18px"></div>
</div>

<script src="https://cdn.jsdelivr.net/npm/bootstrap@5.3.0/dist/js/bootstrap.bundle.min.js"></script>
<script>
// Track each label so its run has the width given in data-w.
document.querySelectorAll('[data-w]').forEach(function (el) {
  var n = el.textContent.length;
  var w = el.getBoundingClientRect().width;
  el.style.letterSpacing = ((+el.dataset.w - w) / n).toFixed(3) + 'px';
});
</script>
</body>
</html>
